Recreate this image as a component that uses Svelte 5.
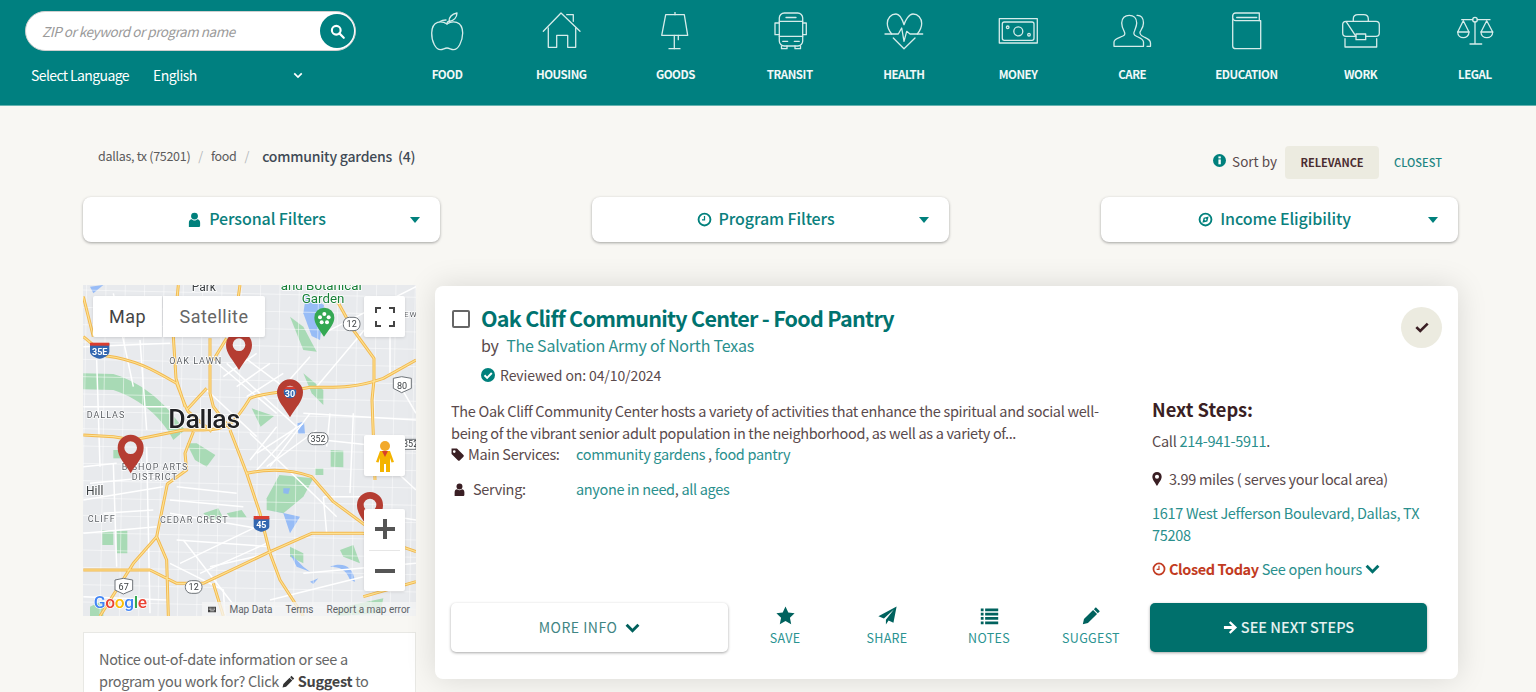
<script>
  const nav = [
    ['FOOD', `<path d="M22 12C17 8.500 7 8 6.700 21C6.500 30 11 37.700 15.500 37.700C18 37.700 19.500 36 22 36C24.500 36 26 37.700 28.500 37.700C33 37.700 37.500 30 37.700 21C37.500 8 27 8.500 22 12Z"/><path d="M22 12C22 10 23 9.500 24 9.500"/><path d="M24 9.500C24 5 27 2 32 1C32 5 29 9 24 9.500Z"/><path d="M15 9.500C16.500 8.500 18 8 21 8"/>`],
    ['HOUSING', `<path d="M4.300 19.300L22 1L41 19.300"/><path d="M9.300 16V35.300H17.700V23.300H28.700V35.300H36.700V16"/><path d="M27.700 2.700H34.300V9.300"/>`],
    ['GOODS', `<path d="M12.700 2.700H31.300L34.700 23.300H8.700Z"/><path d="M22 .5V2.700"/><path d="M21.300 23.300V36.700M25.300 23.300V27.700"/><path d="M16 36.700H27"/>`],
    ['TRANSIT', `<rect x="11.300" y="1" width="23.400" height="33" rx="5"/><path d="M11.300 9.300H34.700M11.300 24.300H34.700"/><path d="M11.300 11H7V22.700H11.300M34.700 11H38.300V22.700H34.700"/><path d="M13.500 34V36.700H19V34M27 34V36.700H32.500V34"/><path d="M14.700 29.300H19.700M26.300 29.300H31.300M18 5.500H28"/>`],
    ['HEALTH', `<path d="M9.700 22C6.500 18 5.300 15 5.300 11.500C5.300 6 9 2 14 2C17.500 2 20.500 8 22 12.700C23.500 8 27 2 31 2C36 2 39.700 6 39.700 11.500C39.700 15 38.500 18 35.300 22"/><path d="M11.300 26L22 36.700L33 26"/><path d="M3 22H16.300L19.700 16L22 29.300L24.700 19.300L28 22H40.700"/>`],
    ['MONEY', `<rect x="3.300" y="6.700" width="38" height="24.300"/><rect x="6.300" y="10" width="31.700" height="18.300" rx="2"/><circle cx="22.300" cy="19.300" r="4.500"/><circle cx="11.700" cy="15.300" r="1.300"/><circle cx="33" cy="22.700" r="1.300"/>`],
    ['CARE', `<path d="M4 34.300V30C4 27 9 26 13 24C15.500 23 15 21 14 19C12.500 16 11.700 14 11.700 11C11.700 6 15 3.300 19.300 3.300C23.500 3.300 26.700 6 26.700 11C26.700 14 25.500 16 24.500 19C23.500 21 23.500 23 26 24C30 26 33.500 27 33.500 30V34.300Z"/><path d="M27 3.300C31 3 33.500 6 33.500 11C33.500 15 31 18 30 20C29.500 22 31 23.500 34 25C38 27 40.500 28 40.500 31V34.300H37"/>`],
    ['EDUCATION', `<path d="M8.700 4C8.700 2 10 1 11.700 1H35.300V8.700"/><path d="M8.700 4V34C8.700 36 10 36.700 11.700 36.700H36.700V8.700H11.700C10 8.700 8.700 7 8.700 5.500"/><path d="M12.700 5.500H32.700"/>`],
    ['WORK', `<path d="M7 9.300H37C39 9.300 40.300 10.500 40.300 12.500V21C40.300 23 39 24.300 37 24.300H26.700M17 24.300H7C5 24.300 3.700 23 3.700 21V12.500C3.700 10.500 5 9.300 7 9.300Z"/><path d="M6 26.700V35H37.700V26.700"/><path d="M14.300 9.300V7C14.300 4 16 2.700 19 2.700H24.700C27.500 2.700 29.300 4 29.300 7V9.300"/><rect x="17" y="22" width="9.700" height="5.700"/>`],
    ['LEGAL', `<circle cx="22" cy="7.700" r="2.300"/><path d="M22 10V32M17 32H28.700M8.700 7.700H19.700M24.300 7.700H37"/><path d="M10.300 8.700L4.700 20H16ZM33.700 8.700L28 20H39.700Z"/><path d="M4.700 20C4.700 27.500 16 27.500 16 20M28 20C28 27.500 39.700 27.500 39.700 20"/>`]
  ];
  const filters = [['user', 'Personal Filters'], ['clock', 'Program Filters'], ['compass', 'Income Eligibility']];
  const actions = [['star', 'SAVE'], ['plane', 'SHARE'], ['list', 'NOTES'], ['pencil', 'SUGGEST']];
  const glyphs = {
    user: `<circle cx="12" cy="6.500" r="5.500"/><path d="M3 24V17C3 13.500 5 11.500 7.500 11.500C9 13 10.500 13.500 12 13.500S15 13 16.500 11.500C19 11.500 21 13.500 21 17V21.500C21 23 20 24 18.500 24Z"/>`,
    clock: `<path fill-rule="evenodd" d="M12 1A11 11 0 1 0 12 23A11 11 0 1 0 12 1ZM12 4A8 8 0 1 1 12 20A8 8 0 1 1 12 4Z"/><path d="M11 6.500H13V13.500H8V11.500H11Z"/>`,
    compass: `<path fill-rule="evenodd" d="M12 1A11 11 0 1 0 12 23A11 11 0 1 0 12 1ZM12 4A8 8 0 1 1 12 20A8 8 0 1 1 12 4Z"/><path fill-rule="evenodd" d="M17 7L15 15L7 17L9 9ZM12 10.500A1.500 1.500 0 1 0 12 13.500A1.500 1.500 0 1 0 12 10.500Z"/>`,
    star: `<path d="M12 .5L15.500 8.200L23.500 9.200L17.600 14.900L19.200 23L12 18.900L4.800 23L6.400 14.900L.5 9.200L8.500 8.200Z"/>`,
    plane: `<path d="M23.500 .5L19.500 21L13.300 18.300L10 23.500V17.500L20 4.500L7.500 15.700L.5 12.800Z"/>`,
    list: `<path d="M1 3H4.500V6.500H1ZM6.500 3H23V6.500H6.500ZM1 8.500H4.500V12H1ZM6.500 8.500H23V12H6.500ZM1 14H4.500V17.500H1ZM6.500 14H23V17.500H6.500ZM1 19.500H4.500V23H1ZM6.500 19.500H23V23H6.500Z"/>`,
    pencil: `<path d="M17.500 1.500L22.500 6.500L20 9L15 4ZM14 5L19 10L7.500 21.500L1 23L2.500 16.500Z"/>`
  };
  const majors = "M40 170L110 228C200 240 250 270 320 310C340 360 345 380 355 395L425 455M40 465L130 470L190 480L340 450L400 450C480 450 500 420 540 355C570 340 620 340 720 322C780 320 840 330 940 295L1038 240M480 450L530 580L570 700L600 820L630 900L700 1008M530 580C600 565 670 570 725 590L790 665L885 735M420 175V340L430 380L480 445M325 15L310 170L318 295L345 380M370 455L345 520L350 570L292 612L260 770L290 840L295 1008M260 770L190 850L90 1008M40 870H240L320 910H400L600 815L725 760H880L1038 815M40 50L70 170M800 60L850 150L912 235V300L906 360L915 600M1038 905L880 950M510 15L505 50M470 175L430 240M350 390L410 325M430 910L460 1008";
  let minor = '';
  for (let y = 30; y < 1010; y += 52) minor += `M39 ${y}L1040 ${y + 22}`;
  for (let x = 50; x < 1040; x += 58) minor += `M${x} 15L${x - 18} 1010`;
</script>

<div class="page">
  <header class="top">
    <div class="tools">
      <div class="search">
        <span class="ph">ZIP or keyword or program name</span>
        <span class="go">
          <svg viewBox="0 0 24 24" width="15" height="15" fill="none" stroke="#fff" stroke-width="3.400"><circle cx="10" cy="10" r="7"/><path d="M15 15L22 22" stroke-linecap="round"/></svg>
        </span>
      </div>
      <div class="lang">
        <span class="lang-l">Select Language</span>
        <span class="lang-v">English</span>
        <svg class="lang-c" viewBox="0 0 12 8" width="10" height="7" fill="none" stroke="#fff" stroke-width="2"><path d="M1.500 1.500L6 6L10.500 1.500"/></svg>
      </div>
    </div>
    <nav class="nav">
      {#each nav as [label, icon]}
        <a class="nav-i" href="#top">
          <svg viewBox="0 0 44 40" width="44" height="40" fill="none" stroke="#d6ecea" stroke-width="1.300" stroke-linejoin="round" stroke-linecap="round">{@html icon}</svg>
          <span>{label}</span>
        </a>
      {/each}
    </nav>
  </header>

  <main class="main">
    <div class="crumbs">
      <div class="trail">
        <span>dallas, tx (75201)</span><i>/</i><span>food</span><i>/</i><b>community gardens &nbsp;(4)</b>
      </div>
      <div class="sort">
        <svg viewBox="0 0 24 24" width="13" height="13"><circle cx="12" cy="12" r="12" fill="#00807c"/><rect x="10" y="10" width="4.400" height="9" fill="#fff"/><rect x="10" y="4.500" width="4.400" height="3.600" fill="#fff"/></svg>
        <span class="sort-l">Sort by</span>
        <span class="sort-on">RELEVANCE</span>
        <span class="sort-off">CLOSEST</span>
      </div>
    </div>

    <div class="filters">
      {#each filters as [g, label]}
        <button class="filter">
          <span class="f-label">
            <svg viewBox="0 0 24 24" width="15" height="15" fill="#00807c">{@html glyphs[g]}</svg>
            {label}
          </span>
          <svg class="caret" viewBox="0 0 10 6" width="10" height="6"><path d="M0 0H10L5 6Z" fill="#00807c"/></svg>
        </button>
      {/each}
    </div>

    <div class="content">
      <aside class="side">
        <div class="map">
          <svg viewBox="39 15 999 993" width="333" height="331" class="map-svg">
            <rect x="39" y="15" width="999" height="993" fill="#e8eaed"/>
            <g fill="#a8dab5">
              <path d="M40 280L130 282C190 300 260 340 320 420L345 450L310 480C280 420 220 360 130 330L40 328Z"/>
              <path d="M350 490L380 490L436 525L410 560L375 540Z"/>
              <path d="M545 385L612 408L572 440Z"/>
              <path d="M590 655L628 585L730 595L700 650L640 700L590 690Z"/>
              <path d="M782 510L820 512L820 562L782 560Z"/>
              <path d="M97 750L130 755L130 795L97 795ZM140 752L172 752L172 820L140 820Z"/>
              <path d="M660 110L700 140L740 215L700 210Z"/>
              <path d="M700 280L760 330L760 375L725 340Z"/>
              <path d="M400 700L445 685L460 715L420 720Z"/>
              <path d="M470 700L515 690L530 712L480 712Z"/>
              <path d="M810 810L850 795L870 850L820 830Z"/>
              <path d="M660 800L700 820L700 850L660 830Z"/>
              <path d="M735 565L760 565L760 585L735 585Z"/>
              <path d="M60 980L100 960L100 1008L60 1008Z"/>
              <path d="M800 985L940 955L930 1000L800 1008Z"/>
              <path d="M130 510L160 510L160 535L130 535Z"/>
            </g>
            <g fill="#8ab4f8" opacity=".85">
              <path d="M708 45L762 75L750 180L725 168L700 100Z"/>
              <path d="M682 430L702 425L705 462L685 462Z"/>
              <path d="M640 625L660 625L655 642L640 640Z"/>
              <path d="M780 860C820 845 850 860 855 905L840 900C830 870 810 860 780 860Z"/>
              <path d="M660 820L700 860L720 875L680 860Z"/>
              <path d="M720 905L745 895L730 912Z"/>
              <path d="M60 20L100 15L70 40Z"/>
              <path d="M600 690L690 710L660 760L640 700Z"/>
            </g>
            <path d={minor} fill="none" stroke="#fff" stroke-width="2.500" opacity=".6"/>
            <g fill="none" stroke="#fff" stroke-width="4.500">
              <path d="M40 200L300 190M40 380L300 380M40 560L140 550M40 660L280 620M40 760L260 740M40 950L290 960M300 700L560 745M320 780L600 800M300 850L460 930L465 1008"/>
              <path d="M130 40L190 320M210 180L230 450M230 500L240 1000M130 550L140 860M80 240L90 560M60 610L260 590M100 700L250 690"/>
              <path d="M430 240L620 400M470 250L680 440M520 230L640 320M410 330L560 470M540 460L800 710M620 440L540 540M680 440L560 570M720 400L600 560"/>
              <path d="M460 290L560 220M500 320L600 250M530 350L640 280M560 520L700 430M590 560L740 450M320 620L500 640M300 660L520 680M330 850L560 740M390 880L590 790"/>
              <path d="M720 230L640 320M900 130L740 320M1038 420L700 400M1038 510L760 480M760 650L880 650M760 650L770 760M1038 720L910 700M920 520L1038 630"/>
              <path d="M340 780L510 1000M420 860L600 820M600 960L880 890M700 880L1038 850M980 300L1038 400M760 160L1038 20M960 120L960 280M780 400L770 500M850 400L840 640"/>
            </g>
            <path d={majors} fill="none" stroke="#f2b84f" stroke-width="9" stroke-linejoin="round"/>
            <path d={majors} fill="none" stroke="#fde293" stroke-width="3.500" stroke-linejoin="round"/>
            <g font-family="Roboto, sans-serif" font-size="27" fill="#5f6368" letter-spacing="3" stroke="#fff" stroke-width="4" paint-order="stroke">
              <text x="298" y="251">OAK LAWN</text>
              <text x="50" y="415">DALLAS</text>
              <text x="155" y="571">BISHOP ARTS</text>
              <text x="185" y="599">DISTRICT</text>
              <text x="53" y="727">CLIFF</text>
              <text x="270" y="729">CEDAR CREST</text>
              <text x="1002" y="110" font-size="24">EW</text>
            </g>
            <g font-family="Roboto, sans-serif" stroke="#fff" stroke-width="5" paint-order="stroke">
              <text x="295" y="445" font-size="80" font-weight="500" fill="#202124" letter-spacing="-1">Dallas</text>
              <text x="48" y="645" font-size="36" fill="#3c4043">Hill</text>
              <text x="365" y="33" font-size="36" fill="#3c4043">Park</text>
              <text x="632" y="30" font-size="40" fill="#188038">and Botanical</text>
              <text x="695" y="70" font-size="40" fill="#188038">Garden</text>
            </g>
            <path d="M762 170C745 145 733 130 733 113A30 30 0 0 1 793 113C793 130 780 145 762 170Z" fill="#34a853"/>
            <g fill="#fff"><circle cx="763" cy="102" r="6"/><circle cx="750" cy="112" r="6"/><circle cx="776" cy="112" r="6"/><circle cx="755" cy="127" r="6"/><circle cx="771" cy="127" r="6"/></g>
            <g font-family="Roboto, sans-serif" font-size="27" fill="#3c4043" text-anchor="middle">
              <rect x="820" y="112" width="50" height="40" rx="18" fill="#fff" stroke="#70757a" stroke-width="3"/><text x="845" y="142">12</text>
              <rect x="714" y="458" width="60" height="36" rx="16" fill="#fff" stroke="#70757a" stroke-width="3"/><text x="744" y="486">352</text>
              <rect x="346" y="902" width="50" height="38" rx="18" fill="#fff" stroke="#70757a" stroke-width="3"/><text x="371" y="931">12</text>
              <path d="M970 295L995 290L1024 295V325L995 338L970 325Z" fill="#fff" stroke="#70757a" stroke-width="3"/><text x="996" y="326">80</text>
              <path d="M135 900L160 895L188 900V930L160 942L135 930Z" fill="#fff" stroke="#70757a" stroke-width="3"/><text x="161" y="929">67</text>
              <path d="M1002 478H1038V508H1002Z" fill="#fff" stroke="#70757a" stroke-width="3"/><text x="1022" y="500">352</text>
            </g>
            <g font-family="Roboto, sans-serif" font-size="27" font-weight="700" fill="#fff" text-anchor="middle">
              <path d="M60 190H118V215C118 226 100 235 89 236C78 235 60 226 60 215Z" fill="#3367b0"/><rect x="60" y="188" width="58" height="9" fill="#d93c30"/><text x="89" y="224">35E</text>
              <path d="M640 322H680V345C680 352 665 358 660 358C655 358 640 352 640 345Z" fill="#3367b0"/><rect x="640" y="320" width="40" height="8" fill="#d93c30"/><text x="660" y="352">30</text>
              <path d="M551 715H598V740C598 748 580 755 574 755C568 755 551 748 551 740Z" fill="#3367b0"/><rect x="551" y="708" width="47" height="10" fill="#d93c30"/><text x="574" y="745">45</text>
            </g>
            <g fill="#b53d32">
              <path fill-rule="evenodd" d="M507 270C490 240 468 222 468 195A39 39 0 0 1 546 195C546 222 524 240 507 270ZM507 175A19 19 0 1 0 507 213A19 19 0 1 0 507 175Z"/>
              <path fill-rule="evenodd" d="M660 412C643 382 621 364 621 337A39 39 0 0 1 699 337C699 364 677 382 660 412ZM660 317A19 19 0 1 0 660 355A19 19 0 1 0 660 317Z"/>
              <path fill-rule="evenodd" d="M182 580C165 550 143 532 143 503A39 39 0 0 1 221 503C221 532 199 550 182 580ZM182 484A19 19 0 1 0 182 522A19 19 0 1 0 182 484Z"/>
              <path fill-rule="evenodd" d="M900 752C883 722 861 704 861 675A39 39 0 0 1 939 675C939 704 917 722 900 752ZM900 656A19 19 0 1 0 900 694A19 19 0 1 0 900 656Z"/>
            </g>
            <text x="71" y="983" font-family="Roboto, sans-serif" font-size="52" font-weight="500" letter-spacing="-1" stroke="#fff" stroke-width="4" paint-order="stroke"><tspan fill="#4285f4">G</tspan><tspan fill="#ea4335">o</tspan><tspan fill="#fbbc05">o</tspan><tspan fill="#4285f4">g</tspan><tspan fill="#34a853">l</tspan><tspan fill="#ea4335">e</tspan></text>
          </svg>
          <div class="mt">
            <span class="mt-on">Map</span>
            <span>Satellite</span>
          </div>
          <div class="mctl full">
            <svg viewBox="0 0 20 20" width="20" height="20" fill="none" stroke="#444" stroke-width="2"><path d="M1 6V1H6M14 1H19V6M19 14V19H14M6 19H1V14"/></svg>
          </div>
          <div class="mctl peg">
            <svg viewBox="0 0 20 32" width="20" height="32"><circle cx="10" cy="6" r="5" fill="#f2a92c"/><path d="M5 11H15L19 22L16.500 22.500L15 18V32H11V24H9V32H5V18L3.500 22.500L1 22Z" fill="#f4b400"/><path d="M7 11L10 17L13 11Z" fill="#d8402a"/></svg>
          </div>
          <div class="mzoom">
            <svg viewBox="0 0 20 20" width="20" height="20"><path d="M8 0H12V8H20V12H12V20H8V12H0V8H8Z" fill="#555"/></svg>
            <hr />
            <svg viewBox="0 0 20 20" width="20" height="20"><rect y="8" width="20" height="4" fill="#555"/></svg>
          </div>
          <div class="attrib">
            <svg viewBox="0 0 16 10" width="15" height="9"><path fill="#444" fill-rule="evenodd" d="M0 0H16V10H0ZM1.500 1.500V3H3V1.500ZM4 1.500V3H5.500V1.500ZM6.500 1.500V3H8V1.500ZM9 1.500V3H10.500V1.500ZM11.500 1.500V3H13V1.500ZM1.500 4V5.500H3V4ZM4 4V5.500H5.500V4ZM6.500 4V5.500H8V4ZM9 4V5.500H10.500V4ZM11.500 4V5.500H13V4ZM4 7V8.500H12V7Z"/></svg>
            <span>Map Data</span><span>Terms</span><span>Report a map error</span>
          </div>
        </div>
        <div class="note">
          Notice out-of-date information or see a program you work for? Click
          <svg viewBox="0 0 24 24" width="13" height="13" fill="#333">{@html glyphs.pencil}</svg>
          <b>Suggest</b> to
        </div>
      </aside>

      <article class="card">
        <span class="tick">
          <svg viewBox="0 0 16 12" width="14" height="11" fill="none" stroke="#3a1f24" stroke-width="3"><path d="M1.500 5.500L6 10L14.500 1.500"/></svg>
        </span>
        <div class="head">
          <span class="box"></span>
          <div>
            <h2>Oak Cliff Community Center - Food Pantry</h2>
            <p class="by">by <a href="#top">The Salvation Army of North Texas</a></p>
            <p class="rev">
              <svg viewBox="0 0 24 24" width="14" height="14"><circle cx="12" cy="12" r="12" fill="#00807c"/><path d="M6 12.500L10.500 17L18.500 8.500" fill="none" stroke="#fff" stroke-width="3.400"/></svg>
              Reviewed on: 04/10/2024
            </p>
          </div>
        </div>
        <div class="body">
          <div class="info">
            <p class="desc">The Oak Cliff Community Center hosts a variety of activities that enhance the spiritual and social well-being of the vibrant senior adult population in the neighborhood, as well as a variety of...</p>
            <div class="row r1">
              <span class="k">
                <svg viewBox="0 0 24 24" width="13" height="13" fill="#3a1f24"><path d="M1 1H11L23 13C24 14 24 15 23 16L16 23C15 24 14 24 13 23L1 11ZM6 4A2.500 2.500 0 1 0 6 9A2.500 2.500 0 1 0 6 4Z" fill-rule="evenodd"/></svg>
                Main Services:
              </span>
              <span class="v"><a href="#top">community gardens</a> , <a href="#top">food pantry</a></span>
            </div>
            <div class="row r2">
              <span class="k">
                <svg class="u" viewBox="0 0 24 24" width="13" height="13" fill="#3a1f24">{@html glyphs.user}</svg>
                Serving:
              </span>
              <span class="v"><a href="#top">anyone in need</a>, <a href="#top">all ages</a></span>
            </div>
          </div>
          <div class="next">
            <h3>Next Steps:</h3>
            <p>Call <a href="#top">214-941-5911</a>.</p>
            <p class="miles">
              <svg viewBox="0 0 16 24" width="10" height="14"><path fill="#3a1f24" fill-rule="evenodd" d="M8 24C4 17 0 13 0 8A8 8 0 0 1 16 8C16 13 12 17 8 24ZM8 4.500A3.500 3.500 0 1 0 8 11.500A3.500 3.500 0 1 0 8 4.500Z"/></svg>
              <span>3.99 miles ( serves your local area)</span>
            </p>
            <p class="addr"><a href="#top">1617 West Jefferson Boulevard, Dallas, TX 75208</a></p>
            <p class="hours">
              <svg viewBox="0 0 24 24" width="14" height="14" fill="#c23b22">{@html glyphs.clock}</svg>
              <b>Closed Today</b> <a href="#top">See open hours</a>
              <svg viewBox="0 0 16 11" width="15" height="10" fill="none" stroke="#00706c" stroke-width="3.200"><path d="M1.500 2L8 8.500L14.500 2"/></svg>
            </p>
          </div>
        </div>
        <div class="foot">
          <button class="more"><span>MORE INFO</span>
            <svg viewBox="0 0 16 11" width="15" height="10" fill="none" stroke="#00605c" stroke-width="3.200"><path d="M1.500 2L8 8.500L14.500 2"/></svg>
          </button>
          <div class="acts">
            {#each actions as [g, label]}
              <a class="act" href="#top">
                <svg viewBox="0 0 24 24" width="19" height="19" fill="#00625e">{@html glyphs[g]}</svg>
                <span>{label}</span>
              </a>
            {/each}
          </div>
          <button class="go-next">
            <svg viewBox="0 0 24 24" width="15" height="15" fill="#fff"><path d="M12 2L22.500 12L12 22L9.500 19.500L14.500 14.500H1.500V9.500H14.500L9.500 4.500Z"/></svg>
            <span>SEE NEXT STEPS</span>
          </button>
        </div>
      </article>
    </div>
  </main>
</div>

<style>
  :global(body) { margin: 0; overflow: hidden; background: #f8f7f3; }
  .page {
    height: 692px; overflow: hidden; background: #f8f7f3;
    font-family: "Noto Sans CJK SC", "Noto Sans", sans-serif; color: #5a4a4c;
  }
  a { color: #2a8f8d; text-decoration: none; }
  p, h2, h3 { margin: 0; font-weight: 400; }

  .top { height: 106px; background: #008080; display: flex; border-bottom: 1px solid #66b3b0; box-sizing: border-box; }
  .tools { width: 390px; flex: none; padding: 11px 0 0 25px; box-sizing: border-box; }
  .search {
    width: 331px; height: 40px; box-sizing: border-box; background: #fff; border: 1px solid #cfcfcf; border-radius: 20px;
    display: flex; align-items: center; justify-content: space-between; padding: 0 1px 0 16px;
  }
  .ph { font-size: 13.500px; font-style: italic; color: #9a9a9a; line-height: 20px; letter-spacing: -.47px; padding-bottom: 1px; }
  .go { width: 34px; height: 34px; border-radius: 50%; background: #008080; display: flex; align-items: center; justify-content: center; }
  .lang { display: flex; align-items: center; margin-top: 13px; padding-left: 6px; color: #fff; height: 22px; }
  .lang-l { font-size: 14px; width: 122px; line-height: 20px; letter-spacing: -.6px; }
  .lang-v { font-size: 14px; width: 140px; line-height: 20px; letter-spacing: -.55px; }
  .nav { flex: 1; display: grid; grid-template-columns: repeat(10, 114.200px); }
  .nav-i { display: flex; flex-direction: column; align-items: center; padding-top: 12px; color: #fff; }
  .nav-i svg { display: block; }
  .nav-i span { font-size: 11.500px; font-weight: 700; line-height: 16px; margin-top: 14px; color: #f1f8f8; letter-spacing: -.45px; }

  .main { padding: 40px 78px 0 83px; }
  .crumbs { display: flex; justify-content: space-between; align-items: center; height: 33px; padding-left: 15px; }
  .trail { font-size: 12.500px; display: flex; align-items: center; color: #5b5b5b; margin-top: -14px; line-height: 20px; letter-spacing: -.3px; }
  .trail i { font-style: normal; color: #b5b8bb; margin: 0 8px; }
  .trail b { font-size: 14px; font-weight: 500; color: #3f4a55; margin-left: 5px; letter-spacing: -.2px; }
  .sort { display: flex; align-items: center; height: 33px; padding-right: 16px; }
  .sort svg { margin-right: 6px; margin-top: -4px; }
  .sort-l { font-size: 13.500px; margin-right: 8px; margin-top: -4px; line-height: 20px; }
  .sort-on { font-size: 11px; font-weight: 700; color: #4a2c30; background: #ecebe0; border-radius: 4px; height: 33px; width: 94px; display: flex; align-items: center; justify-content: center; padding-bottom: 2px; box-sizing: border-box; }
  .sort-off { font-size: 11px; font-weight: 500; color: #1d8582; margin-left: 15px; padding-bottom: 2px; letter-spacing: .05px; }

  .filters { display: flex; justify-content: space-between; margin-top: 18px; }
  .filter {
    width: 357px; height: 45px; background: #fff; border: 0; border-radius: 8px; box-shadow: 0 1px 3px rgba(0,0,0,.35);
    display: flex; align-items: center; padding: 0 20px; font-family: inherit;
  }
  .f-label { flex: 1; display: flex; align-items: center; justify-content: center; gap: 7px; font-size: 16px; font-weight: 500; color: #0a807d; line-height: 20px; letter-spacing: -.1px; padding-bottom: 4px; box-sizing: border-box; }
  .f-label svg { margin-top: 4px; }
  
  .content { display: flex; gap: 19px; margin-top: 43px; }
  .side { width: 333px; flex: none; }
  .map { position: relative; width: 333px; height: 331px; overflow: hidden; }
  .map-svg { display: block; filter: blur(.35px); }
  .mt { position: absolute; left: 10px; top: 11px; display: flex; gap: 1px; font-family: Roboto, sans-serif; font-size: 18px; color: #666; }
  .mt span { background: #fff; height: 41px; display: flex; align-items: center; justify-content: center; width: 102px; border-radius: 0 2px 2px 0; letter-spacing: .5px; box-shadow: 0 1px 3px rgba(0,0,0,.12); }
  .mt .mt-on { width: 69px; color: #444; border-radius: 2px 0 0 2px; }
  .mctl { position: absolute; left: 281px; width: 41px; height: 41px; background: #fff; border-radius: 2px; display: flex; align-items: center; justify-content: center; box-shadow: 0 1px 3px rgba(0,0,0,.12); }
  .full { top: 11px; }
  .peg { top: 150px; }
  .mzoom { position: absolute; left: 281px; top: 224px; width: 41px; height: 82px; background: #fff; border-radius: 2px; display: flex; flex-direction: column; align-items: center; justify-content: space-between; padding: 10px 0; box-sizing: border-box; box-shadow: 0 1px 3px rgba(0,0,0,.12); }
  .mzoom hr { width: 31px; border: 0; border-top: 1px solid #e6e6e6; margin: 0; }
  .attrib { position: absolute; right: 0; bottom: 0; height: 14px; width: 214px; box-sizing: border-box; padding: 0 6px 0 6px; background: rgba(245,245,245,.75); display: flex; align-items: center; gap: 13px; font-family: Roboto, sans-serif; font-size: 10px; color: #5f6368; white-space: nowrap; }
  .note { margin-top: 16px; background: #fff; border: 1px solid #e8e8e4; padding: 15px 15px; font-size: 14.500px; line-height: 22px; color: #666; letter-spacing: -.33px; }
  .note svg { vertical-align: -1px; }
  .note b { color: #444; font-weight: 700; }

  .card {
    position: relative; flex: 1; min-width: 0; height: 393px; margin-top: 1px; box-sizing: border-box; background: #fff; border-radius: 8px;
    box-shadow: 0 0 30px rgba(0,0,0,.13); padding: 19px 30px 27px 16px; display: flex; flex-direction: column;
  }
  .tick { position: absolute; right: 16px; top: 21px; width: 41px; height: 41px; border-radius: 50%; background: #ecebe0; display: flex; align-items: center; justify-content: center; }
  .head { display: flex; gap: 11px; }
  .box { width: 18px; height: 18px; box-sizing: border-box; border: 2px solid #666; border-radius: 2px; margin: 5px 0 0 1px; flex: none; }
  h2 { font-size: 21.500px; font-weight: 700; line-height: 26px; color: #00736f; letter-spacing: -.73px; }
  .by { font-size: 16px; line-height: 22px; margin-top: 3px; letter-spacing: -.2px; }
  .by a { margin-left: 4px; }
  .rev { display: flex; align-items: center; gap: 5px; font-size: 14px; line-height: 20px; margin-top: 9px; letter-spacing: -.1px; }
  .body { display: flex; justify-content: space-between; margin-top: 15px; }
  .info { width: 650px; font-size: 14.500px; line-height: 22px; letter-spacing: -.33px; }
  .row { display: flex; }
  .r1 { margin-top: -1px; }
  .r2 { margin-top: 13px; }
  .k { width: 125px; flex: none; display: flex; align-items: center; gap: 4px; }
  .u { margin-left: 2px; margin-right: 3px; }
  .next { width: 276px; font-size: 14.500px; line-height: 22px; letter-spacing: -.3px; margin-top: -2px; }
  h3 { font-size: 18.300px; font-weight: 700; color: #3a1f24; line-height: 24px; margin: -1px 0 9px; letter-spacing: 0; }
  .miles { margin-top: 16px; display: flex; align-items: center; gap: 7px; }
  .addr { margin-top: 12px; }
  .hours { margin-top: 12px; display: flex; align-items: center; gap: 3px; white-space: nowrap; }
  .hours b { color: #c23b22; font-weight: 700; letter-spacing: -.4px; }
  .foot { margin-top: auto; display: flex; align-items: center; }
  .more { width: 277px; height: 49px; background: #fff; border: 0; border-radius: 5px; box-shadow: 0 1px 3px rgba(0,0,0,.35); font-family: inherit; font-size: 14px; letter-spacing: .5px; color: #3f8583; display: flex; align-items: center; justify-content: center; gap: 8px; }
  .more span, .go-next span { margin-top: -2px; }
  .acts { display: grid; grid-template-columns: repeat(4, 102px); margin: -3px 8px 0 6px; }
  .act { display: flex; flex-direction: column; align-items: center; color: #2a9391; font-size: 12.500px; letter-spacing: .3px; line-height: 16px; gap: 5px; }
  .go-next { width: 277px; height: 49px; background: #00706c; border: 0; border-radius: 5px; box-shadow: 0 1px 3px rgba(0,0,0,.35); font-family: inherit; font-size: 14.500px; letter-spacing: 0; color: #e4f1f0; display: flex; align-items: center; justify-content: center; gap: 3px; font-weight: 500; }
</style>
